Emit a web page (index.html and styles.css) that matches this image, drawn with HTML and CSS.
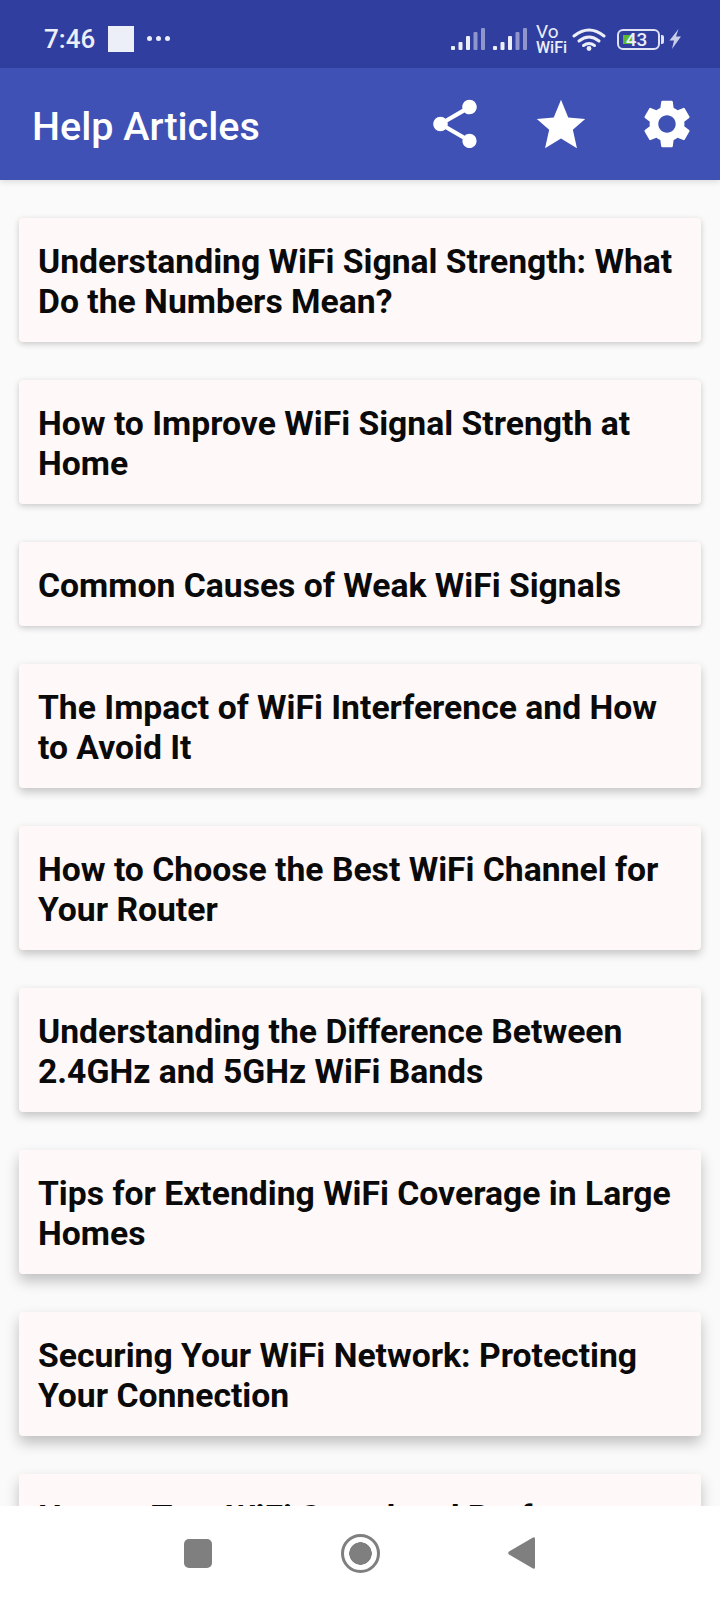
FILE: index.html
```html
<!DOCTYPE html>
<html lang="en">
<head>
  <meta charset="UTF-8" />
  <meta name="viewport" content="width=device-width, initial-scale=1.0" />
  <title>Help Articles</title>
  <link rel="stylesheet" href="styles.css">
</head>
<body>

<!-- Status bar -->
<div class="status-bar">
  <span class="time">7:46</span>
  <span class="notif-square"></span>
  <span class="notif-dots"><i></i><i></i><i></i></span>
  <div class="status-right">
    <svg class="signal" viewBox="0 0 35 22" fill="#eceef8">
      <rect x="0" y="18" width="4" height="4" rx="1"/>
      <rect x="7.5" y="14" width="4" height="8" rx="1"/>
      <rect x="15" y="8" width="4" height="14" rx="1"/>
      <rect x="22.5" y="4" width="4" height="18" rx="1" opacity="0.5"/>
      <rect x="30" y="0" width="4" height="22" rx="1" opacity="0.5"/>
    </svg>
    <svg class="signal" viewBox="0 0 35 22" fill="#eceef8">
      <rect x="0" y="18" width="4" height="4" rx="1"/>
      <rect x="7.5" y="14" width="4" height="8" rx="1"/>
      <rect x="15" y="8" width="4" height="14" rx="1"/>
      <rect x="22.5" y="4" width="4" height="18" rx="1" opacity="0.5"/>
      <rect x="30" y="0" width="4" height="22" rx="1" opacity="0.5"/>
    </svg>
    <span class="vowifi"><span class="vo">Vo</span><br>WiFi</span>
    <svg class="wifi" viewBox="0 0 34 24" fill="none" stroke="#eceef8" stroke-width="3" stroke-linecap="round">
      <path d="M2 9 Q17 -3 32 9"/>
      <path d="M7 14 Q17 6 27 14"/>
      <path d="M11.5 18.5 Q17 14.5 22.5 18.5"/>
      <circle cx="17" cy="21.5" r="2.4" fill="#eceef8" stroke="none"/>
    </svg>
    <span class="battery">43</span>
    <span class="battery-nub"></span>
    <svg class="bolt" viewBox="0 0 12 20" fill="#c9cde9">
      <path d="M9.5 0 L0.5 11.5 H5 L3 20 L12 7.5 H7 Z"/>
    </svg>
  </div>
</div>

<!-- App bar -->
<div class="app-bar">
  <h1>Help Articles</h1>
  <div class="actions">
    <svg viewBox="0 0 24 24" fill="#fff"><path d="M18 16.08c-.76 0-1.44.3-1.96.77L8.91 12.7c.05-.23.09-.46.09-.7s-.04-.47-.09-.7l7.05-4.11c.54.5 1.25.81 2.04.81 1.66 0 3-1.34 3-3s-1.34-3-3-3-3 1.34-3 3c0 .24.04.47.09.7L8.04 9.81C7.5 9.31 6.79 9 6 9c-1.66 0-3 1.34-3 3s1.34 3 3 3c.79 0 1.5-.31 2.04-.81l7.12 4.16c-.05.21-.08.43-.08.65 0 1.61 1.31 2.92 2.92 2.92 1.61 0 2.92-1.31 2.92-2.92s-1.31-2.92-2.92-2.92z"/></svg>
    <svg viewBox="0 0 24 24" fill="#fff"><path d="M12 2 L15 9.3 L22 9.9 L16.9 14.4 L18.6 22 L12 18 L5.4 22 L7.1 14.4 L2 9.9 L9 9.3 Z"/></svg>
    <svg viewBox="0 0 24 24" fill="#fff"><path d="M19.14 12.94c.04-.3.06-.61.06-.94 0-.32-.02-.64-.07-.94l2.03-1.58c.18-.14.23-.41.12-.61l-1.92-3.32c-.12-.22-.37-.29-.59-.22l-2.39.96c-.5-.38-1.03-.7-1.62-.94l-.36-2.54c-.04-.24-.24-.41-.48-.41h-3.84c-.24 0-.43.17-.47.41l-.36 2.54c-.59.24-1.13.57-1.62.94l-2.39-.96c-.22-.08-.47 0-.59.22L2.74 8.87c-.12.21-.08.47.12.61l2.03 1.58c-.05.3-.09.63-.09.94s.02.64.07.94l-2.03 1.58c-.18.14-.23.41-.12.61l1.92 3.32c.12.22.37.29.59.22l2.39-.96c.5.38 1.03.7 1.62.94l.36 2.54c.05.24.24.41.48.41h3.84c.24 0 .44-.17.47-.41l.36-2.54c.59-.24 1.13-.56 1.62-.94l2.39.96c.22.08.47 0 .59-.22l1.92-3.32c.12-.22.07-.47-.12-.61l-2.01-1.58zM12 15.6c-1.98 0-3.6-1.62-3.6-3.6s1.62-3.6 3.6-3.6 3.6 1.62 3.6 3.6-1.62 3.6-3.6 3.6z"/></svg>
  </div>
</div>

<!-- Articles -->
<div class="list">
  <div class="card">Understanding WiFi Signal Strength: What Do the Numbers Mean?</div>
  <div class="card">How to Improve WiFi Signal Strength at Home</div>
  <div class="card">Common Causes of Weak WiFi Signals</div>
  <div class="card">The Impact of WiFi Interference and How to Avoid It</div>
  <div class="card">How to Choose the Best WiFi Channel for Your Router</div>
  <div class="card">Understanding the Difference Between 2.4GHz and 5GHz WiFi Bands</div>
  <div class="card">Tips for Extending WiFi Coverage in Large Homes</div>
  <div class="card">Securing Your WiFi Network: Protecting Your Connection</div>
  <div class="card">How to Test WiFi Speed and Performance</div>
</div>

<!-- Navigation bar -->
<div class="nav-bar">
  <span class="nav-square"></span>
  <span class="nav-circle"></span>
  <svg class="nav-back" viewBox="0 0 27 32" fill="#7f7f7f"><path d="M25 0.6 Q27 -0.6 27 2 V30 Q27 32.6 25 31.4 L1 17.5 Q-0.6 16 1 14.5 Z"/></svg>
</div>

</body>
</html>
```

FILE: styles.css
```css
* { margin: 0; padding: 0; box-sizing: border-box; }
body {
  width: 720px;
  height: 1600px;
  display: flex;
  flex-direction: column;
  overflow: hidden;
  background: #fafafa;
  font-family: Roboto, sans-serif;
}
.status-bar {
  height: 68px;
  flex: none;
  display: flex;
  align-items: center;
  padding: 10px 39px 0 44px;
  background: #303f9f;
  color: #eceef8;
}
.time {
  font-size: 26px;
  font-weight: 500;
  line-height: 30px;
}
.notif-square {
  width: 26px;
  height: 26px;
  margin-left: 13px;
  background: #eceef8;
}
.notif-dots {
  display: flex;
  gap: 4px;
  margin-left: 13px;
  margin-bottom: 2px;
}
.notif-dots i {
  width: 5px;
  height: 5px;
  border-radius: 50%;
  background: #eceef8;
}
.status-right {
  margin-left: auto;
  display: flex;
  align-items: center;
}
.signal {
  width: 35px;
  height: 22px;
  margin-right: 7px;
}
.vowifi {
  font-size: 16px;
  line-height: 15px;
  font-weight: 500;
  width: 36px;
  margin-left: 1px;
}
.vo {
  font-size: 19px;
  font-weight: 400;
}
.wifi {
  width: 34px;
  height: 24px;
  margin-right: 11px;
}
.battery {
  width: 43px;
  height: 21px;
  padding-right: 4px;
  border: 2px solid #dfe2f3;
  border-radius: 6px;
  background: linear-gradient(#5cb82e, #5cb82e) 4px 4px / 11px 9px no-repeat;
  font-size: 19px;
  line-height: 17px;
  font-weight: 500;
  text-align: center;
}
.battery-nub {
  width: 3px;
  height: 9px;
  margin-left: 1px;
  border-radius: 0 2px 2px 0;
  background: #dfe2f3;
}
.bolt {
  width: 12px;
  height: 20px;
  margin-left: 5px;
}
.app-bar {
  height: 112px;
  flex: none;
  display: flex;
  align-items: center;
  justify-content: space-between;
  padding: 0 24px 0 32px;
  background: #3f51b5;
  color: white;
  box-shadow: 0 2px 6px rgba(0,0,0,0.12);
  z-index: 1;
}
h1 {
  font-size: 39.5px;
  font-weight: 500;
  line-height: 46px;
  margin-top: 6px;
}
.actions {
  display: flex;
  gap: 48px;
}
.actions svg {
  width: 58px;
  height: 58px;
}
.list {
  flex: 1;
  min-height: 0;
  overflow: hidden;
  display: flex;
  flex-direction: column;
  gap: 38px;
  padding: 38px 19px 0;
}
.card {
  flex: none;
  padding: 24px 19px 20px;
  background: #fef8f8;
  border-radius: 4px;
  box-shadow: 0 2px 6px rgba(0,0,0,0.2);
  color: #0a0a0a;
  font-size: 33.7px;
  font-weight: 700;
  line-height: 40px;
}
/* shadow gets longer further down the screen */
.card:nth-child(n+4) {
  box-shadow: 0 4px 10px rgba(0,0,0,0.22);
}
.card:nth-child(n+7) {
  box-shadow: 0 7px 14px rgba(0,0,0,0.24);
}
.nav-bar {
  height: 94px;
  flex: none;
  display: flex;
  align-items: center;
  justify-content: center;
  gap: 128px;
  background: white;
  z-index: 1;
}
.nav-square {
  width: 28px;
  height: 29px;
  margin-right: 1px;
  border-radius: 5px;
  background: #7f7f7f;
}
.nav-circle {
  width: 39px;
  height: 39px;
  border: 3px solid #7f7f7f;
  border-radius: 50%;
  display: flex;
  align-items: center;
  justify-content: center;
  background: radial-gradient(circle, #7f7f7f 0 11px, white 11.5px);
}
.nav-back {
  width: 27px;
  height: 32px;
  margin-right: 2px;
}
```
